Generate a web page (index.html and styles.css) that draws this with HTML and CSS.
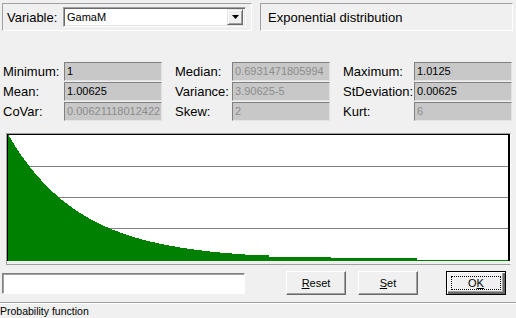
FILE: index.html
```html
<!DOCTYPE html>
<html lang="en">
<head>
  <meta charset="UTF-8" />
  <title>Distribution</title>
  <link rel="stylesheet" href="styles.css">
</head>
<body>

  <div class="top">
    <div class="panel panel-var">
      <span class="var-label">Variable:</span>
      <div class="combo">
        <span class="combo-text">GamaM</span>
        <span class="combo-btn">
          <svg width="7" height="4" viewBox="0 0 7 4"><path d="M0 0h7L3.5 4z" fill="#000"/></svg>
        </span>
      </div>
    </div>
    <div class="panel panel-dist">Exponential distribution</div>
  </div>

  <div class="stats">
    <span class="lbl">Minimum:</span><span class="val">1</span>
    <span class="lbl lbl-gap">Median:</span><span class="val off">0.6931471805994</span>
    <span class="lbl lbl-gap">Maximum:</span><span class="val">1.0125</span>

    <span class="lbl">Mean:</span><span class="val">1.00625</span>
    <span class="lbl lbl-gap">Variance:</span><span class="val off">3.90625-5</span>
    <span class="lbl lbl-gap">StDeviation:</span><span class="val">0.00625</span>

    <span class="lbl">CoVar:</span><span class="val off">0.00621118012422</span>
    <span class="lbl lbl-gap">Skew:</span><span class="val off">2</span>
    <span class="lbl lbl-gap">Kurt:</span><span class="val off">6</span>
  </div>

  <div class="chart">
    <div class="plot">
      <svg class="plot-svg" width="500" height="126" viewBox="0 0 500 126" shape-rendering="crispEdges">
        <rect x="0" y="31" width="500" height="1" fill="#808080"/>
        <rect x="0" y="62" width="500" height="1" fill="#808080"/>
        <rect x="0" y="93" width="500" height="1" fill="#808080"/>
        <path id="hist" fill="#008000" d=""/>
      </svg>
    </div>
  </div>

  <div class="actions">
    <div class="input"></div>
    <button class="btn btn-reset"><u>R</u>eset</button>
    <button class="btn btn-set"><u>S</u>et</button>
    <button class="btn btn-ok"><span class="focus">O<u>K</u></span></button>
  </div>

  <div class="status">Probability function</div>

  <script src="script.js"></script>
</body>
</html>
```

FILE: styles.css
```css
* { box-sizing: border-box; }
html, body {
  margin: 0;
  width: 516px;
  height: 318px;
  overflow: hidden;
  background: #f0f0f0;
  font-family: "Liberation Sans", Arial, sans-serif;
  color: #000;
}

/* top row */
.top {
  display: flex;
  gap: 8px;
  padding: 3px 3px 0 2px;
}
.panel {
  height: 28px;
  border: 1px solid;
  border-color: #a0a0a0 #fff #fff #a0a0a0;
  display: flex;
  align-items: center;
  font-size: 13px;
}
.panel-var { width: 250px; padding-left: 4px; }
.panel-dist { flex: 1; padding-left: 7px; }
.var-label { width: 56px; }

.combo {
  width: 183px;
  height: 20px;
  background: #fff;
  border: 1px solid;
  border-color: #a0a0a0 #fff #fff #a0a0a0;
  box-shadow: inset 1px 1px #696969, inset -1px -1px #e3e3e3;
  display: flex;
  align-items: center;
  padding: 0 2px 0 3px;
}
.combo-text { flex: 1; font-size: 11px; }
.combo-btn {
  width: 16px;
  height: 16px;
  background: #f0f0f0;
  border: 1px solid;
  border-color: #e3e3e3 #696969 #696969 #e3e3e3;
  box-shadow: inset 1px 1px #fff, inset -1px -1px #a0a0a0;
  display: flex;
  align-items: center;
  justify-content: center;
}
.combo-btn svg { display: block; }

/* stats grid */
.stats {
  margin-top: 31px;
  padding-left: 3px;
  display: grid;
  grid-template-columns: 61px 98px 70px 98px 84px 98px;
  grid-auto-rows: 19px;
  row-gap: 1px;
}
.lbl {
  font-size: 13px;
  line-height: 19px;
  white-space: nowrap;
}
.lbl-gap { padding-left: 13px; }
.val {
  background: #c8c8c8;
  border: 1px solid;
  border-color: #808080 #e3e3e3 #e3e3e3 #808080;
  font-size: 11px;
  line-height: 17px;
  padding-left: 2px;
  white-space: nowrap;
  overflow: hidden;
}
.val.off { color: #8c8c8c; }

/* chart */
.chart {
  margin: 12px 5px 0 6px;
  border: 1px solid;
  border-color: #a0a0a0 #fff #a0a0a0 #a0a0a0;
  padding-bottom: 3px;
}
.plot {
  background: #fff;
  border-top: 1px solid #000;
  border-left: 1px solid #000;
  border-right: 2px solid #000;
}
.plot-svg { display: block; }

/* bottom buttons */
.actions {
  margin-top: 6px;
  height: 24px;
  display: flex;
  align-items: center;
  padding-left: 2px;
}
.input {
  width: 243px;
  height: 21px;
  background: #fff;
  border: 1px solid;
  border-color: #808080 #fff #fff #808080;
  box-shadow: inset 1px 1px #a0a0a0;
}
.btn {
  width: 60px;
  height: 24px;
  padding: 0;
  background: #f0f0f0;
  border: 1px solid;
  border-color: #fff #696969 #696969 #fff;
  box-shadow: inset -1px -1px #a0a0a0;
  font-family: "Liberation Sans", Arial, sans-serif;
  font-size: 11px;
  color: #000;
}
.btn-reset { margin-left: 41px; }
.btn-set { margin-left: 12px; }
.btn-ok {
  margin-left: 28px;
  border: 1px solid #000;
  box-shadow: inset 1px 1px #fff, inset -2px -2px #696969, inset -3px -3px #a0a0a0;
  display: flex;
  padding: 4px;
}
.focus {
  flex: 1;
  border: 1px dotted #000;
  display: flex;
  align-items: center;
  justify-content: center;
}

/* status bar */
.status {
  margin-top: 7px;
  border-top: 1px solid #a0a0a0;
  box-shadow: inset 0 1px #fff;
  font-size: 10.5px;
  line-height: 14px;
  padding-top: 1px;
}
```

FILE: script.js
```js
const hist = document.getElementById("hist");

// bar heights of the probability function, one column per pixel
function barHeight(i) {
  if (i < 248) return 118 * Math.exp(-i / 70) + 8 * Math.exp(-i / 200);
  if (i < 261) return 6;
  if (i < 323) return 4;
  if (i < 409) return 3;
  return 1;
}

let d = "M0 126";
for (let i = 0; i < 500; i++) {
  const h = Math.min(126, Math.max(1, Math.round(barHeight(i))));
  d += ` V${126 - h} H${i + 1}`;
}
d += " V126 Z";
hist.setAttribute("d", d);
```
